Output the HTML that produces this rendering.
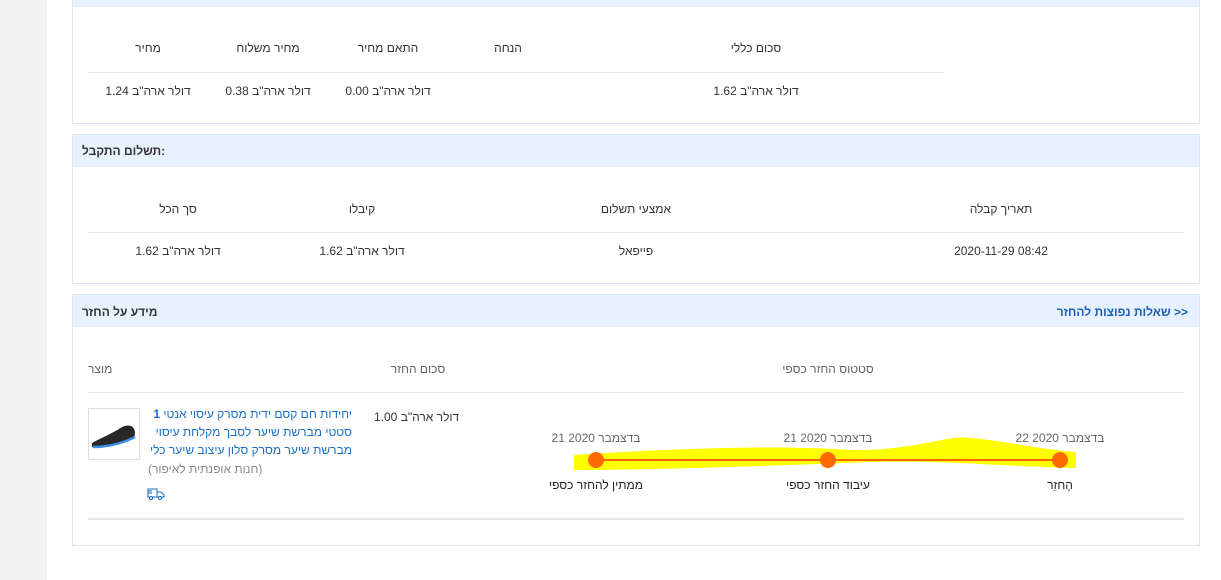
<!DOCTYPE html>
<html><head><meta charset="utf-8"><style>
*{margin:0;padding:0;box-sizing:border-box}
body{width:1221px;height:580px;background:#fff;font-family:"Liberation Sans",Arial,sans-serif;font-size:12px;color:#333;position:relative;overflow:hidden}
.t{position:absolute;white-space:nowrap;direction:rtl;transform:translateX(-50%)}
.r{position:absolute;white-space:nowrap;direction:rtl}
.panel{position:absolute;left:72px;width:1128px;border:1px solid #dde6f2;background:#fff}
.hd{position:absolute;left:0;right:0;top:0;background:#e8f2fe}
.line{position:absolute;height:1px;background:#e6e6e6}
.g{color:#666}
.p{position:absolute;right:869px;white-space:nowrap;direction:rtl;color:#1a6fc4;line-height:18px}
</style></head><body>
<div style="position:absolute;left:0;top:0;width:47px;height:580px;background:#f1f1f1"></div>

<div class="panel" style="top:-2px;height:126px"><div class="hd" style="height:8px"></div></div>
<div class="t" style="left:148px;top:41px">מחיר</div>
<div class="t" style="left:268px;top:41px">מחיר משלוח</div>
<div class="t" style="left:388px;top:41px">התאם מחיר</div>
<div class="t" style="left:508px;top:41px">הנחה</div>
<div class="t" style="left:756px;top:41px">סכום כללי</div>
<div class="line" style="left:88px;top:72px;width:856px"></div>
<div class="t" style="left:148px;top:84px">דולר ארה"ב 1.24</div>
<div class="t" style="left:268px;top:84px">דולר ארה"ב 0.38</div>
<div class="t" style="left:388px;top:84px">דולר ארה"ב 0.00</div>
<div class="t" style="left:756px;top:84px">דולר ארה"ב 1.62</div>

<div class="panel" style="top:134px;height:150px"><div class="hd" style="height:32px"></div></div>
<div class="r" style="left:82px;top:144px;font-weight:bold;direction:ltr">תשלום התקבל:</div>
<div class="t" style="left:178px;top:202px">סך הכל</div>
<div class="t" style="left:362px;top:202px">קיבלו</div>
<div class="t" style="left:636px;top:202px">אמצעי תשלום</div>
<div class="t" style="left:1001px;top:202px">תאריך קבלה</div>
<div class="line" style="left:88px;top:232px;width:1096px"></div>
<div class="t" style="left:178px;top:244px">דולר ארה"ב 1.62</div>
<div class="t" style="left:362px;top:244px">דולר ארה"ב 1.62</div>
<div class="t" style="left:636px;top:244px">פייפאל</div>
<div class="t" style="left:1001px;top:244px;direction:ltr">2020-11-29 08:42</div>

<div class="panel" style="top:294px;height:252px"><div class="hd" style="height:32px"></div></div>
<div class="r" style="left:82px;top:305px;font-weight:bold">מידע על החזר</div>
<div class="r" style="right:33px;top:305px;color:#1a5fb4;font-weight:bold">&lt;&lt; שאלות נפוצות להחזר</div>
<div class="r g" style="left:88px;top:362px">מוצר</div>
<div class="t g" style="left:418px;top:362px">סכום החזר</div>
<div class="t g" style="left:828px;top:362px">סטטוס החזר כספי</div>
<div class="line" style="left:88px;top:392px;width:1096px"></div>
<div style="position:absolute;left:88px;top:408px;width:52px;height:52px;border:1px solid #ddd;background:#fff;overflow:hidden">
<svg width="50" height="50"><path d="M3,34 C10,30 20,26 30,20 C38,14 46,16 46,24 C46,30 40,32 30,34 C18,36 8,40 3,38Z" fill="#2a2626"/><path d="M4,38 C16,38 30,36 46,28" stroke="#3a8ee6" stroke-width="2.5" fill="none"/></svg></div>
<div class="p" style="top:405px">יחידות חם קסם ידית מסרק עיסוי אנטי <b>1</b></div>
<div class="p" style="top:423px">סטטי מברשת שיער לסבך מקלחת עיסוי</div>
<div class="p" style="top:441px">מברשת שיער מסרק סלון עיצוב שיער כלי</div>
<div class="r" style="left:148px;top:462px;color:#888">(חנות אופנתית לאיפור)</div>
<svg style="position:absolute;left:147px;top:487px" width="18" height="13"><path d="M1,2 H10 V10 H1Z M10,5 H14 L17,8 V10 H10 M1,4 H5 M1,6 H5" fill="none" stroke="#1a6fc4" stroke-width="1"/><circle cx="4" cy="11" r="1.5" fill="#fff" stroke="#1a6fc4"/><circle cx="13" cy="11" r="1.5" fill="#fff" stroke="#1a6fc4"/></svg>
<div class="r" style="left:374px;top:410px">דולר ארה"ב 1.00</div>

<svg style="position:absolute;left:570px;top:430px" width="512" height="50">
<path d="M4,25 C80,20 200,14 280,20 C340,22 380,4 400,8 C430,10 460,18 506,22 L506,38 C420,36 380,30 300,32 C200,36 80,40 4,40Z" fill="#ffff00"/>
<line x1="26" y1="30" x2="490" y2="30" stroke="#ff6600" stroke-width="2"/>
<circle cx="26" cy="30" r="8" fill="#ff6a00"/><circle cx="258" cy="30" r="8" fill="#ff6a00"/><circle cx="490" cy="30" r="8" fill="#ff6a00"/>
</svg>
<div class="t g" style="left:596px;top:431px">בדצמבר 2020 21</div>
<div class="t g" style="left:828px;top:431px">בדצמבר 2020 21</div>
<div class="t g" style="left:1060px;top:431px">בדצמבר 2020 22</div>
<div class="t" style="left:596px;top:478px;color:#222">ממתין להחזר כספי</div>
<div class="t" style="left:828px;top:478px;color:#222">עיבוד החזר כספי</div>
<div class="t" style="left:1060px;top:478px;color:#222">הֶחזֵר</div>
<div class="line" style="left:88px;top:518px;width:1096px;height:2px"></div>
</body></html>
